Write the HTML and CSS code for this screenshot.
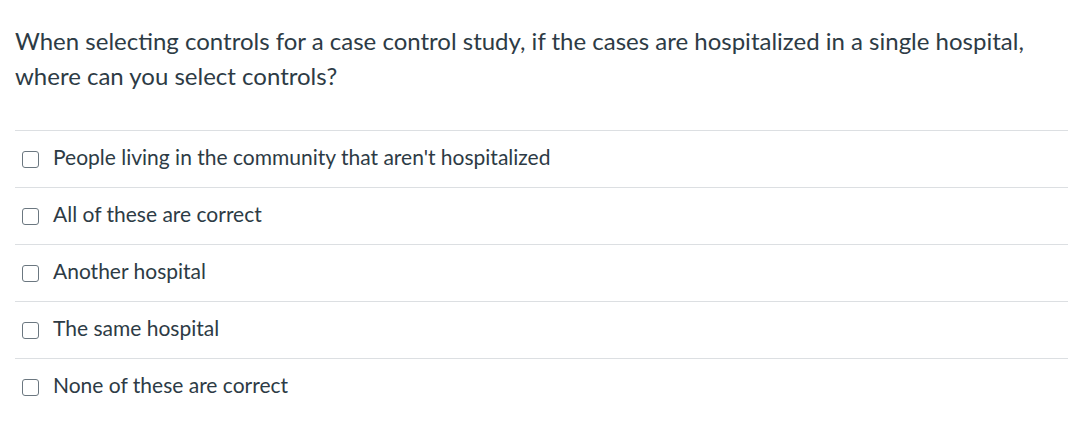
FILE: index.html
```html
<!DOCTYPE html>
<html lang="en">
<head>
<meta charset="utf-8">
<title>Question</title>
<link rel="stylesheet" href="styles.css">
</head>
<body>
<div class="question">
  <p class="question-text">When selecting controls for a case control study, if the cases are hospitalized in a single hospital, where can you select controls?</p>
  <ul class="answers">
    <li class="answer"><span class="box"></span><span class="label">People living in the community that aren't hospitalized</span></li>
    <li class="answer"><span class="box"></span><span class="label">All of these are correct</span></li>
    <li class="answer"><span class="box"></span><span class="label">Another hospital</span></li>
    <li class="answer"><span class="box"></span><span class="label">The same hospital</span></li>
    <li class="answer"><span class="box"></span><span class="label">None of these are correct</span></li>
  </ul>
</div>
</body>
</html>
```

FILE: styles.css
```css
html, body {
  margin: 0;
  padding: 0;
  background: #ffffff;
}
body {
  font-family: Lato, "Open Sans", sans-serif;
  color: #2d3b45;
}
.question {
  padding: 23px 0 0 15px;
}
.question-text {
  margin: 0;
  font-size: 24px;
  line-height: 35px;
  padding-right: 20px;
}
.answers {
  list-style: none;
  margin: 37px 0 0 0;
  padding: 0;
}
.answer {
  display: flex;
  align-items: center;
  height: 56px;
  border-top: 1px solid #dcdfe2;
  padding-left: 7px;
  font-size: 21px;
}
.box {
  width: 15px;
  height: 15px;
  border: 1px solid #6b7780;
  border-radius: 3px;
  flex: none;
  margin-right: 14px;
}
.label {
  line-height: 26px;
  margin-bottom: 4px;
}
```
